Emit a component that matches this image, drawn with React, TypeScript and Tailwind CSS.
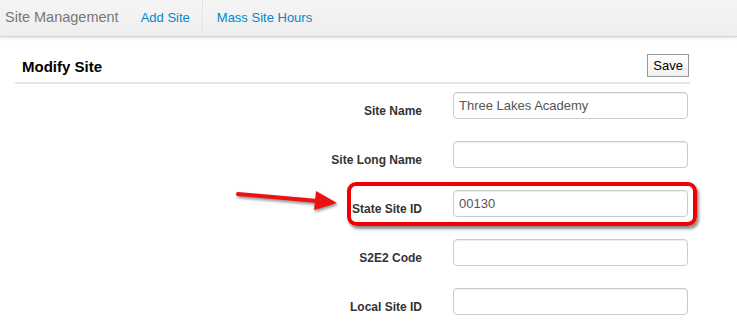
import React from "react";

const fields = [
  { label: "Site Name", value: "Three Lakes Academy" },
  { label: "Site Long Name", value: "" },
  { label: "State Site ID", value: "00130" },
  { label: "S2E2 Code", value: "" },
  { label: "Local Site ID", value: "" },
];

export default function App() {
  return (
    <div className="relative w-[737px] h-[332px] overflow-hidden bg-white font-['Liberation_Sans',Arial,sans-serif] text-[#333]">
      {/* top navbar */}
      <nav className="flex h-[37px] items-stretch border-b border-[#d4d4d4] bg-gradient-to-b from-[#f5f5f5] to-[#eeeeee] shadow-[0_1px_3px_rgba(0,0,0,0.12)]">
        <span className="flex items-center pl-[5px] pr-[22px] text-[14.5px] text-[#777]">
          Site Management
        </span>
        <a href="#" className="flex items-center pr-[12px] text-[13px] text-[#0088cc]">
          Add Site
        </a>
        <div className="mb-[2px] w-[2px] border-l border-r border-l-[#e2e2e2] border-r-[#f8f8f8]" />
        <a href="#" className="flex items-center pl-[13px] text-[13px] text-[#0088cc]">
          Mass Site Hours
        </a>
      </nav>

      <div className="pl-[15px] pr-[47px]">
        {/* header */}
        <div className="flex h-[47px] items-end justify-between border-b-2 border-[#e5e5e5] pb-[5px] pl-[7px]">
          <h2 className="mb-[1px] text-[15px] font-bold leading-[18px] text-black">Modify Site</h2>
          <button className="mr-[1px] h-[23px] border border-[#999] bg-gradient-to-b from-white to-[#f0f0f0] px-[5px] text-[13px] text-black">
            Save
          </button>
        </div>

        {/* form */}
        <div className="mt-[8px] flex flex-col gap-[22px]">
          {fields.map((f) => (
            <div key={f.label} className="flex items-end gap-[31px]">
              <label className="-mb-[1px] w-[407px] text-right text-[12px] font-bold leading-[18px] text-[#333]">
                {f.label}
              </label>
              <input
                readOnly
                value={f.value}
                className="h-[27px] w-[235px] rounded-[4px] border border-[#cccccc] px-[5px] text-[13px] text-[#555] shadow-[inset_0_1px_1px_rgba(0,0,0,0.075)] outline-none"
              />
            </div>
          ))}
        </div>
      </div>

      {/* annotation: red box */}
      <div className="absolute left-[347px] top-[182px] h-[44px] w-[350px] rounded-[9px] border-4 border-[#f00000] shadow-[2px_3px_3px_rgba(0,0,0,0.45)]" />

      {/* annotation: arrow */}
      <svg className="absolute left-[230px] top-[185px]" width="115" height="30" viewBox="0 0 115 30">
        <g style={{ filter: "drop-shadow(1px 2px 1.5px rgba(0,0,0,0.45))" }}>
          <line x1="8" y1="9" x2="88" y2="16" stroke="#ee1111" strokeWidth="4" strokeLinecap="round" />
          <polygon points="86,6 107,18 84,25" fill="#ee1111" />
        </g>
      </svg>
    </div>
  );
}
